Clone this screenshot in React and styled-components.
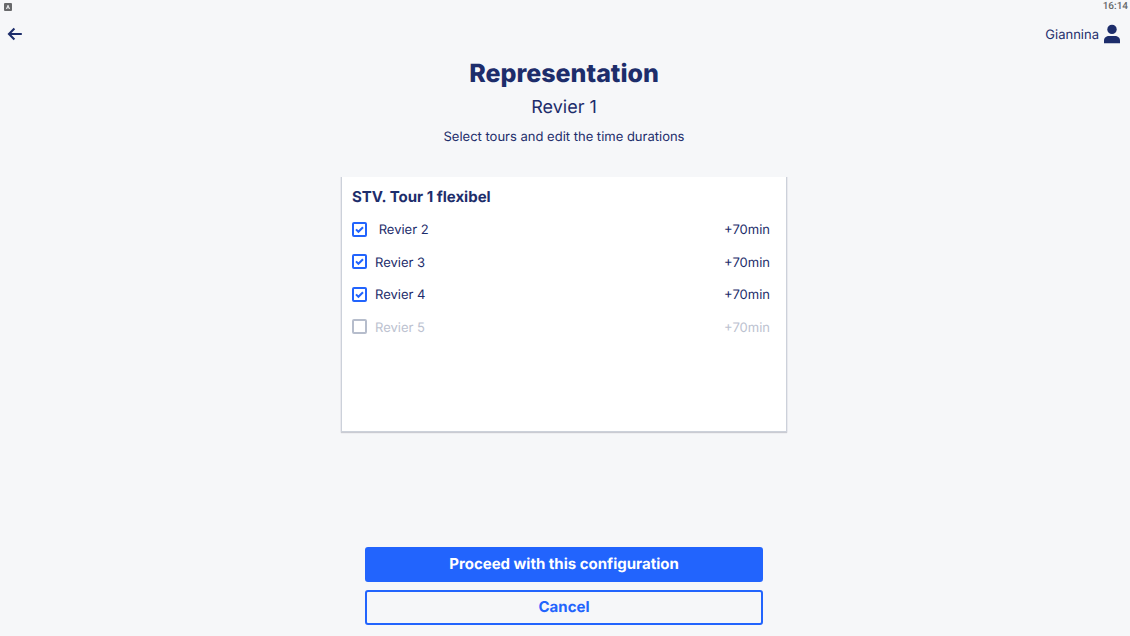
import React, { useState } from "react"
import styled, { createGlobalStyle } from "styled-components"

const GlobalStyle = createGlobalStyle`
* {
    box-sizing: border-box;
}

body {
    margin: 0;
    background-color: #f6f7f9;
    color: #1d2d6b;
    font-family: Inter, "Liberation Sans", sans-serif;
    font-size: 13px;
    line-height: 20px;
    text-rendering: geometricPrecision;
}

h1, h2, p {
    margin: 0;
}
`

const Page = styled.div`
display: flex;
flex-direction: column;
min-height: 100vh;
padding-right: 2px;
`

const StatusBar = styled.div`
display: flex;
justify-content: space-between;
align-items: center;
height: 13px;
padding-left: 4px;
color: #68696b;
font-family: Roboto, sans-serif;
font-size: 10px;
font-weight: 500;
line-height: 13px;
`

const Header = styled.header`
display: flex;
justify-content: space-between;
align-items: center;
height: 42px;
padding: 0 7px;
`

const BackButton = styled.button`
display: flex;
padding: 0;
border: none;
background: none;
color: inherit;
cursor: pointer;
`

const User = styled.div`
display: flex;
align-items: center;
gap: 4px;
`

const Text = styled.span`
padding-top: 2px;
white-space: pre;
`

const Intro = styled.div`
display: flex;
flex-direction: column;
align-items: center;
text-align: center;
`

const Title = styled.h1`
font-size: 25px;
font-weight: 800;
line-height: 38px;
`

const Subtitle = styled.h2`
font-size: 18px;
font-weight: 400;
line-height: 30px;
`

const Hint = styled.p`
line-height: 28px;
`

const Card = styled.section`
width: 444px;
max-width: 100%;
min-height: 254px;
margin: 26px auto 24px;
padding: 8px 16px 8px 10px;
background-color: #fff;
box-shadow: 0 0 1px 1px #ccd1da, 0 1px 1px 1px #c9cbd0;
clip-path: inset(0 -3px -3px -2px);
`

const CardTitle = styled.h2`
font-size: 15px;
font-weight: 700;
line-height: 24px;
`

const Tours = styled.div`
display: grid;
grid-auto-rows: 1fr;
height: 130px;
margin-top: 4px;
`

const Tour = styled.label`
display: flex;
align-items: center;
gap: 8px;
color: ${props => props.$active ? "#1d2d6b" : "#bcc2d0"};
cursor: pointer;
`

const TourName = styled(Text)`
flex: 1;
`

const Box = styled.span`
display: grid;
width: 15px;
height: 15px;

> * {
    grid-area: 1 / 1;
}
`

const Checkbox = styled.input`
appearance: none;
width: 15px;
height: 15px;
margin: 0;
border: 2px solid #b6bdcc;
border-radius: 2px;

&:checked {
    border-color: #2264fd;
}
`

const Actions = styled.footer`
display: flex;
flex-direction: column;
gap: 8px;
width: 398px;
max-width: 100%;
margin: auto auto 11px;
`

const Button = styled.button`
height: 35px;
padding: 0 0 2px;
border: 2px solid #2264fd;
border-radius: 3px;
background-color: ${props => props.$primary ? "#2264fd" : "transparent"};
color: ${props => props.$primary ? "#fff" : "#2264fd"};
font-family: inherit;
font-size: 15px;
font-weight: 700;
line-height: 20px;
text-rendering: inherit;
cursor: pointer;
`

const KeyboardIcon = () => (
    <svg width="8" height="8" viewBox="0 0 8 8" aria-hidden="true">
        <rect width="8" height="8" rx="1" fill="#68696b"/>
        <path d="M2.4 6L4 2.2L5.6 6M3 4.8H5" fill="none" stroke="#f6f7f9" strokeWidth="0.9"/>
    </svg>
)

const ArrowIcon = () => (
    <svg width="16" height="14" viewBox="0 0 16 14" aria-hidden="true">
        <path
            d="M14.8 7H2.2M7.4 1.6L2 7L7.4 12.4"
            fill="none"
            stroke="currentColor"
            strokeWidth="2.1"
        />
    </svg>
)

const UserIcon = () => (
    <svg width="18" height="20" viewBox="0 0 18 20" fill="currentColor" aria-hidden="true">
        <circle cx="9" cy="5.4" r="4.7"/>
        <path d="M1 19.2V16.6C1 13.6 3.4 12 6 12H12C14.6 12 17 13.6 17 16.6V19.2Z"/>
    </svg>
)

const CheckIcon = () => (
    <svg width="15" height="15" viewBox="0 0 15 15" aria-hidden="true" pointerEvents="none">
        <path d="M4 7.4L6.4 9.8L11 5.2" fill="none" stroke="#2264fd" strokeWidth="2"/>
    </svg>
)

// the first name comes with a leading space
const initialTours = [
    { name: " Revier 2", minutes: 70, checked: true },
    { name: "Revier 3", minutes: 70, checked: true },
    { name: "Revier 4", minutes: 70, checked: true },
    { name: "Revier 5", minutes: 70, checked: false },
]

const App = () => {
    const [tours, setTours] = useState(initialTours)

    const toggle = (name) => setTours(tours.map(tour => (
        tour.name === name ? { ...tour, checked: !tour.checked } : tour
    )))

    return (
        <Page>
            <GlobalStyle/>
            <StatusBar>
                <KeyboardIcon/>
                <span>16:14</span>
            </StatusBar>

            <Header>
                <BackButton type="button" aria-label="Back">
                    <ArrowIcon/>
                </BackButton>
                <User>
                    <Text>Giannina</Text>
                    <UserIcon/>
                </User>
            </Header>

            <Intro>
                <Title>Representation</Title>
                <Subtitle>Revier 1</Subtitle>
                <Hint>Select tours and edit the time durations</Hint>
            </Intro>

            <Card>
                <CardTitle>STV. Tour 1 flexibel</CardTitle>
                <Tours>
                    {tours.map(tour => (
                        <Tour key={tour.name} $active={tour.checked}>
                            <Box>
                                <Checkbox
                                    type="checkbox"
                                    checked={tour.checked}
                                    onChange={() => toggle(tour.name)}
                                />
                                {tour.checked && <CheckIcon/>}
                            </Box>
                            <TourName>{tour.name}</TourName>
                            <Text>+{tour.minutes}min</Text>
                        </Tour>
                    ))}
                </Tours>
            </Card>

            <Actions>
                <Button type="button" $primary>Proceed with this configuration</Button>
                <Button type="button">Cancel</Button>
            </Actions>
        </Page>
    )
}

export default App
